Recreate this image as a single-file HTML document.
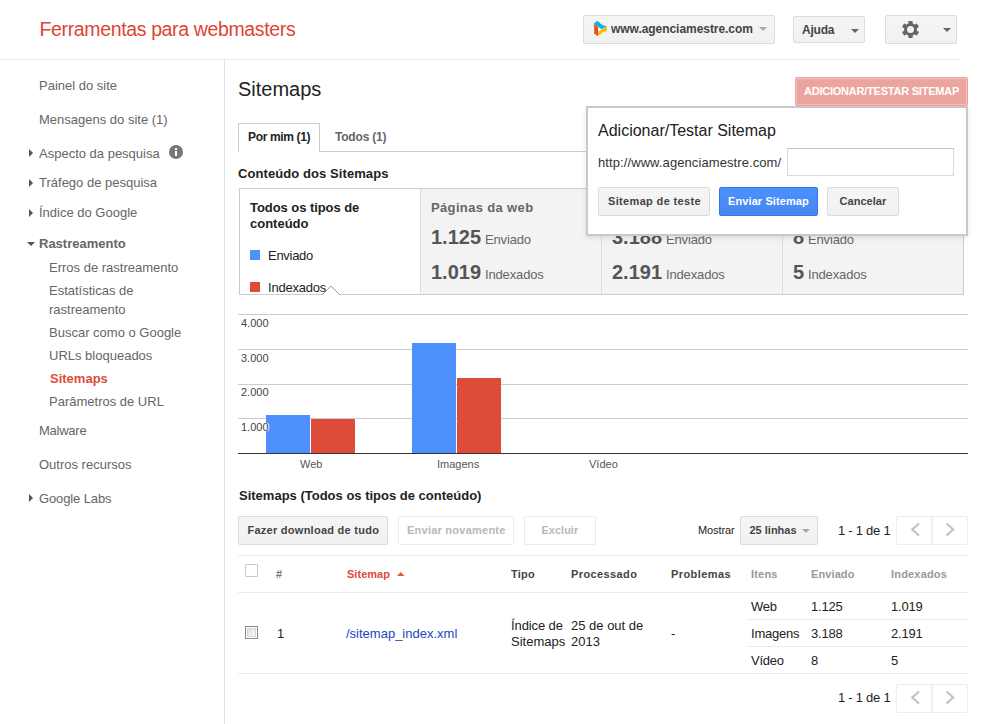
<!DOCTYPE html>
<html><head><meta charset="utf-8"><title>Sitemaps</title>
<style>
html,body{margin:0;padding:0;background:#fff;}
body{width:992px;height:724px;position:relative;overflow:hidden;font-family:"Liberation Sans",sans-serif;}
.t{position:absolute;white-space:nowrap;}
.b{position:absolute;}
</style></head><body>
<div class="t " style="left:39.5px;top:18.24px;font-size:19.5px;line-height:22px;color:#dd4433;letter-spacing:-0.36px;">Ferramentas para webmasters</div>
<div class="b" style="left:0px;top:59px;width:959px;height:1px;background:#ebebeb"></div>
<div class="b" style="left:583px;top:15px;width:192px;height:29px;background:linear-gradient(#f5f5f5,#f1f1f1);border:1px solid #dcdcdc;box-sizing:border-box;border-radius:2px"></div>
<svg class="b" style="left:590px;top:18px" width="20" height="20" viewBox="0 0 20 20">
<polygon points="8,8.8 12,10.8 8,13.8" fill="#fff"/>
<polygon points="4,5.25 7.46,3.04 9.1,4.1 10.2,5.5 11.6,6.1 12.2,6.9 15.5,8 16.8,8.6 12.2,10.7 11,11 8.3,9.1 4.1,6.6" fill="#12b2e6"/>
<polygon points="3.9,6.6 8.1,8.9 8.1,17.8 7.2,18 6.4,17.1 3.9,15.5 4.4,13.8 3.9,11.9 4.4,10.5 3.9,8.3" fill="#e6521f"/>
<polygon points="8,17.8 8,13.8 12.2,11 16.6,8.7 16.9,8.8 16.9,13 14.9,13.5 12.2,14.1 11.6,15.7 9.1,16.9" fill="#f3c200"/>
</svg>
<div class="t " style="left:611px;top:21.84px;font-size:12px;line-height:14px;color:#444;font-weight:bold;letter-spacing:-0.05px;">www.agenciamestre.com</div>
<div class="b" style="left:759px;top:27px;width:0;height:0;border-left:4px solid transparent;border-right:4px solid transparent;border-top:4px solid #aaa"></div>
<div class="b" style="left:793px;top:16px;width:72px;height:27px;background:linear-gradient(#f5f5f5,#f1f1f1);border:1px solid #dcdcdc;box-sizing:border-box;border-radius:2px"></div>
<div class="t " style="left:802px;top:22.84px;font-size:12px;line-height:14px;color:#444;font-weight:bold;letter-spacing:-0.2px;">Ajuda</div>
<div class="b" style="left:851px;top:29px;width:0;height:0;border-left:4px solid transparent;border-right:4px solid transparent;border-top:4px solid #666"></div>
<div class="b" style="left:885px;top:15px;width:72px;height:29px;background:linear-gradient(#f5f5f5,#f1f1f1);border:1px solid #dcdcdc;box-sizing:border-box;border-radius:2px"></div>
<svg class="b" style="left:901px;top:20px" width="19" height="19" viewBox="-9.5 -9.5 19 19"><g fill="#666"><rect x="-2.1" y="-8.6" width="4.2" height="5" rx="0.4" transform="rotate(0)"/><rect x="-2.1" y="-8.6" width="4.2" height="5" rx="0.4" transform="rotate(60)"/><rect x="-2.1" y="-8.6" width="4.2" height="5" rx="0.4" transform="rotate(120)"/><rect x="-2.1" y="-8.6" width="4.2" height="5" rx="0.4" transform="rotate(180)"/><rect x="-2.1" y="-8.6" width="4.2" height="5" rx="0.4" transform="rotate(240)"/><rect x="-2.1" y="-8.6" width="4.2" height="5" rx="0.4" transform="rotate(300)"/><circle r="6.4"/></g><circle r="3.5" fill="#f2f2f2"/></svg>
<div class="b" style="left:943px;top:28px;width:0;height:0;border-left:4px solid transparent;border-right:4px solid transparent;border-top:4px solid #666"></div>
<div class="b" style="left:224px;top:60px;width:1px;height:664px;background:#e3e3e3"></div>
<div class="t " style="left:39px;top:78.00px;font-size:13px;line-height:15px;color:#666;">Painel do site</div>
<div class="t " style="left:39px;top:112.00px;font-size:13px;line-height:15px;color:#666;">Mensagens do site (1)</div>
<div class="b" style="left:29px;top:149px;width:0;height:0;border-top:4px solid transparent;border-bottom:4px solid transparent;border-left:4px solid #555"></div>
<div class="t " style="left:39px;top:146.00px;font-size:13px;line-height:15px;color:#666;">Aspecto da pesquisa</div>
<svg class="b" style="left:169px;top:145px" width="14" height="14" viewBox="0 0 14 14"><circle cx="7" cy="7" r="7" fill="#777"/><rect x="6" y="3" width="2" height="2" fill="#fff"/><rect x="6" y="6" width="2" height="5" fill="#fff"/></svg>
<div class="b" style="left:29px;top:179px;width:0;height:0;border-top:4px solid transparent;border-bottom:4px solid transparent;border-left:4px solid #555"></div>
<div class="t " style="left:39px;top:175.00px;font-size:13px;line-height:15px;color:#666;">Tráfego de pesquisa</div>
<div class="b" style="left:29px;top:209px;width:0;height:0;border-top:4px solid transparent;border-bottom:4px solid transparent;border-left:4px solid #555"></div>
<div class="t " style="left:39px;top:205.00px;font-size:13px;line-height:15px;color:#666;">Índice do Google</div>
<div class="b" style="left:27px;top:242px;width:0;height:0;border-left:4px solid transparent;border-right:4px solid transparent;border-top:4px solid #555"></div>
<div class="t " style="left:39px;top:236.00px;font-size:13px;line-height:15px;color:#666;font-weight:bold;">Rastreamento</div>
<div class="t " style="left:49px;top:260.00px;font-size:13px;line-height:15px;color:#666;">Erros de rastreamento</div>
<div class="t " style="left:49px;top:283.00px;font-size:13px;line-height:15px;color:#666;">Estatísticas de</div>
<div class="t " style="left:49px;top:302.00px;font-size:13px;line-height:15px;color:#666;">rastreamento</div>
<div class="t " style="left:49px;top:325.00px;font-size:13px;line-height:15px;color:#666;">Buscar como o Google</div>
<div class="t " style="left:49px;top:348.00px;font-size:13px;line-height:15px;color:#666;">URLs bloqueados</div>
<div class="t " style="left:50px;top:371.00px;font-size:13px;line-height:15px;color:#dd4b39;font-weight:bold;">Sitemaps</div>
<div class="t " style="left:49px;top:394.00px;font-size:13px;line-height:15px;color:#666;">Parâmetros de URL</div>
<div class="t " style="left:39px;top:423.00px;font-size:13px;line-height:15px;color:#666;letter-spacing:-0.25px;">Malware</div>
<div class="t " style="left:39px;top:457.00px;font-size:13px;line-height:15px;color:#666;">Outros recursos</div>
<div class="b" style="left:29px;top:494px;width:0;height:0;border-top:4px solid transparent;border-bottom:4px solid transparent;border-left:4px solid #555"></div>
<div class="t " style="left:39px;top:491.00px;font-size:13px;line-height:15px;color:#666;letter-spacing:-0.12px;">Google Labs</div>
<div class="t " style="left:238px;top:77.57px;font-size:20px;line-height:23px;color:#222;">Sitemaps</div>
<div class="b" style="left:320px;top:151px;width:648px;height:1px;background:#ccc"></div>
<div class="b" style="left:238px;top:123px;width:82px;height:29px;border:1px solid #ccc;border-bottom:0;box-sizing:border-box;background:#fff"></div>
<div class="t " style="left:248px;top:129.84px;font-size:12px;line-height:14px;color:#222;font-weight:bold;letter-spacing:-0.35px;">Por mim (1)</div>
<div class="t " style="left:335px;top:129.84px;font-size:12px;line-height:14px;color:#666;font-weight:bold;letter-spacing:-0.2px;">Todos (1)</div>
<div class="t " style="left:238px;top:165.50px;font-size:13px;line-height:15px;color:#222;font-weight:bold;letter-spacing:0.08px;">Conteúdo dos Sitemaps</div>
<div class="b" style="left:239px;top:188px;width:725px;height:107px;border:1px solid #ccc;box-sizing:border-box;background:#f3f3f3"></div>
<div class="b" style="left:240px;top:189px;width:180px;height:105px;background:#fff"></div>
<div class="b" style="left:420px;top:189px;width:1px;height:105px;background:#ddd"></div>
<div class="b" style="left:601px;top:189px;width:1px;height:105px;background:#ddd"></div>
<div class="b" style="left:782px;top:189px;width:1px;height:105px;background:#ddd"></div>
<div class="t " style="left:250px;top:200.00px;font-size:13px;line-height:15px;color:#222;font-weight:bold;letter-spacing:-0.06px;">Todos os tipos de</div>
<div class="t " style="left:250px;top:216.00px;font-size:13px;line-height:15px;color:#222;font-weight:bold;">conteúdo</div>
<div class="b" style="left:250px;top:250px;width:10px;height:10px;background:#4d90fe"></div>
<div class="t " style="left:268px;top:248.00px;font-size:13px;line-height:15px;color:#222;letter-spacing:-0.28px;">Enviado</div>
<div class="b" style="left:250px;top:282px;width:10px;height:10px;background:#dd4b39"></div>
<div class="t " style="left:268px;top:280.00px;font-size:13px;line-height:15px;color:#222;letter-spacing:-0.22px;">Indexados</div>
<svg class="b" style="left:322px;top:285px" width="18" height="10" viewBox="0 0 18 10"><polygon points="0,10 9,1 18,10" fill="#fff" stroke="#999" stroke-width="1"/><rect x="1" y="9" width="16" height="2" fill="#fff"/></svg>
<div class="t " style="left:431px;top:200.00px;font-size:13px;line-height:15px;color:#666;font-weight:bold;letter-spacing:0.35px;">Páginas da web</div>
<div class="t " style="left:431px;top:225.57px;font-size:20px;line-height:23px;color:#555;font-weight:bold;">1.125</div>
<div class="t " style="left:485px;top:232.00px;font-size:13px;line-height:15px;color:#666;letter-spacing:-0.15px;">Enviado</div>
<div class="t " style="left:431px;top:260.57px;font-size:20px;line-height:23px;color:#555;font-weight:bold;">1.019</div>
<div class="t " style="left:485px;top:267.00px;font-size:13px;line-height:15px;color:#666;letter-spacing:-0.15px;">Indexados</div>
<div class="t " style="left:612px;top:200.00px;font-size:13px;line-height:15px;color:#666;font-weight:bold;">Imagens</div>
<div class="t " style="left:612px;top:225.57px;font-size:20px;line-height:23px;color:#555;font-weight:bold;">3.188</div>
<div class="t " style="left:666px;top:232.00px;font-size:13px;line-height:15px;color:#666;letter-spacing:-0.15px;">Enviado</div>
<div class="t " style="left:612px;top:260.57px;font-size:20px;line-height:23px;color:#555;font-weight:bold;">2.191</div>
<div class="t " style="left:666px;top:267.00px;font-size:13px;line-height:15px;color:#666;letter-spacing:-0.15px;">Indexados</div>
<div class="t " style="left:793px;top:200.00px;font-size:13px;line-height:15px;color:#666;font-weight:bold;">Vídeo</div>
<div class="t " style="left:793px;top:225.57px;font-size:20px;line-height:23px;color:#555;font-weight:bold;">8</div>
<div class="t " style="left:808px;top:232.00px;font-size:13px;line-height:15px;color:#666;letter-spacing:-0.15px;">Enviado</div>
<div class="t " style="left:793px;top:260.57px;font-size:20px;line-height:23px;color:#555;font-weight:bold;">5</div>
<div class="t " style="left:808px;top:267.00px;font-size:13px;line-height:15px;color:#666;letter-spacing:-0.15px;">Indexados</div>
<div class="b" style="left:238px;top:314px;width:730px;height:1px;background:#ccc"></div>
<div class="b" style="left:238px;top:349px;width:730px;height:1px;background:#ccc"></div>
<div class="b" style="left:238px;top:384px;width:730px;height:1px;background:#ccc"></div>
<div class="b" style="left:238px;top:418px;width:730px;height:1px;background:#ccc"></div>
<div class="b" style="left:238px;top:453px;width:730px;height:1px;background:#333"></div>
<div class="b" style="left:266px;top:415px;width:44px;height:38px;background:#4d8ffd"></div>
<div class="b" style="left:311px;top:419px;width:44px;height:34px;background:#dd4b39"></div>
<div class="b" style="left:412px;top:343px;width:44px;height:110px;background:#4d8ffd"></div>
<div class="b" style="left:457px;top:378px;width:44px;height:75px;background:#dd4b39"></div>
<div class="t " style="left:241px;top:316.69px;font-size:11px;line-height:13px;color:#444;text-shadow:0 0 1px #fff,0 0 1px #fff,1px 0 0 #fff,-1px 0 0 #fff">4.000</div>
<div class="t " style="left:241px;top:351.69px;font-size:11px;line-height:13px;color:#444;text-shadow:0 0 1px #fff,0 0 1px #fff,1px 0 0 #fff,-1px 0 0 #fff">3.000</div>
<div class="t " style="left:241px;top:385.69px;font-size:11px;line-height:13px;color:#444;text-shadow:0 0 1px #fff,0 0 1px #fff,1px 0 0 #fff,-1px 0 0 #fff">2.000</div>
<div class="t " style="left:241px;top:420.69px;font-size:11px;line-height:13px;color:#444;text-shadow:0 0 1px #fff,0 0 1px #fff,1px 0 0 #fff,-1px 0 0 #fff">1.000</div>
<div class="t " style="left:300px;top:457.69px;font-size:11px;line-height:13px;color:#555;">Web</div>
<div class="t " style="left:437px;top:457.69px;font-size:11px;line-height:13px;color:#555;">Imagens</div>
<div class="t " style="left:589px;top:457.69px;font-size:11px;line-height:13px;color:#555;">Vídeo</div>
<div class="t " style="left:239px;top:488.00px;font-size:13px;line-height:15px;color:#222;font-weight:bold;">Sitemaps (Todos os tipos de conteúdo)</div>
<div class="b" style="left:238px;top:516px;width:150px;height:29px;background:linear-gradient(#f5f5f5,#f1f1f1);border:1px solid #dcdcdc;box-sizing:border-box;border-radius:2px"></div>
<div class="t " style="left:247.5px;top:523.69px;font-size:11px;line-height:13px;color:#444;font-weight:bold;letter-spacing:0.26px;">Fazer download de tudo</div>
<div class="b" style="left:398px;top:516px;width:116px;height:29px;background:#fff;border:1px solid #ebebeb;box-sizing:border-box;border-radius:2px"></div>
<div class="t " style="left:407px;top:523.69px;font-size:11px;line-height:13px;color:#b8b8b8;font-weight:bold;letter-spacing:0.24px;">Enviar novamente</div>
<div class="b" style="left:524px;top:516px;width:72px;height:29px;background:#fff;border:1px solid #ebebeb;box-sizing:border-box;border-radius:2px"></div>
<div class="t " style="left:541.5px;top:523.69px;font-size:11px;line-height:13px;color:#b8b8b8;font-weight:bold;">Excluir</div>
<div class="t " style="left:698px;top:523.69px;font-size:11px;line-height:13px;color:#222;letter-spacing:-0.1px;">Mostrar</div>
<div class="b" style="left:740px;top:516px;width:78px;height:29px;background:linear-gradient(#f5f5f5,#f1f1f1);border:1px solid #dcdcdc;box-sizing:border-box;border-radius:2px"></div>
<div class="t " style="left:749.5px;top:523.69px;font-size:11px;line-height:13px;color:#444;font-weight:bold;">25 linhas</div>
<div class="b" style="left:802px;top:529px;width:0;height:0;border-left:4px solid transparent;border-right:4px solid transparent;border-top:4px solid #aaa"></div>
<div class="t " style="left:838px;top:523.00px;font-size:13px;line-height:15px;color:#222;letter-spacing:-0.25px;">1 - 1 de 1</div>
<div class="b" style="left:896px;top:516px;width:72px;height:29px;border:1px solid #ededed;box-sizing:border-box;border-radius:2px;background:#fff"></div>
<div class="b" style="left:931px;top:516px;width:2px;height:29px;background:#efefef"></div>
<svg class="b" style="left:908px;top:521px" width="14" height="18" viewBox="0 0 14 18"><polyline points="11,2.5 4.3,8.5 11,14.5" fill="none" stroke="#c2c2c2" stroke-width="2.2"/></svg>
<svg class="b" style="left:943px;top:521px" width="14" height="18" viewBox="0 0 14 18"><polyline points="3.5,2.5 10.2,8.5 3.5,14.5" fill="none" stroke="#c2c2c2" stroke-width="2.2"/></svg>
<div class="b" style="left:238px;top:555px;width:730px;height:1px;background:#ebebeb"></div>
<div class="b" style="left:238px;top:592px;width:730px;height:1px;background:#ebebeb"></div>
<div class="b" style="left:238px;top:673px;width:730px;height:1px;background:#ebebeb"></div>
<div class="b" style="left:748px;top:619px;width:220px;height:1px;background:#ebebeb"></div>
<div class="b" style="left:748px;top:646px;width:220px;height:1px;background:#ebebeb"></div>
<div class="b" style="left:245px;top:564px;width:13px;height:13px;border:1px solid #c8c8c8;box-sizing:border-box;background:#fff;border-radius:1px"></div>
<div class="t " style="left:276px;top:567.69px;font-size:11px;line-height:13px;color:#777;font-weight:bold;">#</div>
<div class="t " style="left:347px;top:567.69px;font-size:11px;line-height:13px;color:#dd4b39;font-weight:bold;letter-spacing:0.03px;">Sitemap</div>
<svg class="b" style="left:397px;top:572px" width="8" height="4" viewBox="0 0 8 4"><polygon points="0,4 3.75,0 7.5,4" fill="#e05a48"/></svg>
<div class="t " style="left:511px;top:567.69px;font-size:11px;line-height:13px;color:#444;font-weight:bold;letter-spacing:0.2px;">Tipo</div>
<div class="t " style="left:571px;top:567.69px;font-size:11px;line-height:13px;color:#444;font-weight:bold;letter-spacing:0.39px;">Processado</div>
<div class="t " style="left:671px;top:567.69px;font-size:11px;line-height:13px;color:#444;font-weight:bold;letter-spacing:0.41px;">Problemas</div>
<div class="t " style="left:751px;top:567.69px;font-size:11px;line-height:13px;color:#999;font-weight:bold;letter-spacing:0.2px;">Itens</div>
<div class="t " style="left:811px;top:567.69px;font-size:11px;line-height:13px;color:#999;font-weight:bold;letter-spacing:0.1px;">Enviado</div>
<div class="t " style="left:891px;top:567.69px;font-size:11px;line-height:13px;color:#999;font-weight:bold;letter-spacing:0.18px;">Indexados</div>
<div class="b" style="left:245px;top:626px;width:13px;height:13px;border:1px solid #8a8a8a;box-sizing:border-box;background:#fff"></div>
<div class="b" style="left:247px;top:628px;width:9px;height:9px;border:1px solid #d3d6dc;box-sizing:border-box;background:linear-gradient(135deg,#dcdfe5,#f8f8f8)"></div>
<div class="t " style="left:277px;top:626.00px;font-size:13px;line-height:15px;color:#222;">1</div>
<div class="t " style="left:346px;top:626.00px;font-size:13px;line-height:15px;color:#2246bd;">/sitemap_index.xml</div>
<div class="t " style="left:511px;top:618.00px;font-size:13px;line-height:15px;color:#222;letter-spacing:-0.1px;">Índice de</div>
<div class="t " style="left:511px;top:633.50px;font-size:13px;line-height:15px;color:#222;">Sitemaps</div>
<div class="t " style="left:571px;top:618.00px;font-size:13px;line-height:15px;color:#222;">25 de out de</div>
<div class="t " style="left:571px;top:633.50px;font-size:13px;line-height:15px;color:#222;">2013</div>
<div class="t " style="left:671px;top:626.00px;font-size:13px;line-height:15px;color:#222;">-</div>
<div class="t " style="left:751px;top:599.00px;font-size:13px;line-height:15px;color:#222;letter-spacing:-0.22px;">Web</div>
<div class="t " style="left:811px;top:599.00px;font-size:13px;line-height:15px;color:#222;letter-spacing:-0.22px;">1.125</div>
<div class="t " style="left:891px;top:599.00px;font-size:13px;line-height:15px;color:#222;letter-spacing:-0.22px;">1.019</div>
<div class="t " style="left:751px;top:626.00px;font-size:13px;line-height:15px;color:#222;letter-spacing:-0.22px;">Imagens</div>
<div class="t " style="left:811px;top:626.00px;font-size:13px;line-height:15px;color:#222;letter-spacing:-0.22px;">3.188</div>
<div class="t " style="left:891px;top:626.00px;font-size:13px;line-height:15px;color:#222;letter-spacing:-0.22px;">2.191</div>
<div class="t " style="left:751px;top:653.00px;font-size:13px;line-height:15px;color:#222;letter-spacing:-0.22px;">Vídeo</div>
<div class="t " style="left:811px;top:653.00px;font-size:13px;line-height:15px;color:#222;">8</div>
<div class="t " style="left:891px;top:653.00px;font-size:13px;line-height:15px;color:#222;">5</div>
<div class="t " style="left:838px;top:690.00px;font-size:13px;line-height:15px;color:#222;letter-spacing:-0.25px;">1 - 1 de 1</div>
<div class="b" style="left:896px;top:684px;width:72px;height:29px;border:1px solid #ededed;box-sizing:border-box;border-radius:2px;background:#fff"></div>
<div class="b" style="left:931px;top:684px;width:2px;height:29px;background:#efefef"></div>
<svg class="b" style="left:908px;top:689px" width="14" height="18" viewBox="0 0 14 18"><polyline points="11,2.5 4.3,8.5 11,14.5" fill="none" stroke="#c2c2c2" stroke-width="2.2"/></svg>
<svg class="b" style="left:943px;top:689px" width="14" height="18" viewBox="0 0 14 18"><polyline points="3.5,2.5 10.2,8.5 3.5,14.5" fill="none" stroke="#c2c2c2" stroke-width="2.2"/></svg>
<div class="b" style="left:795px;top:77px;width:173px;height:29px;background:#eca59e;border:1px solid #eca29a;box-sizing:border-box;border-radius:2px;box-shadow:inset 0 0 0 1px #f4c2bd"></div>
<div class="t " style="left:804px;top:84.69px;font-size:11px;line-height:13px;color:#fff;font-weight:bold;letter-spacing:-0.23px;">ADICIONAR/TESTAR SITEMAP</div>
<div class="b" style="left:586px;top:106px;width:382px;height:130px;background:#fff;border:2px solid #c9c9c9;box-sizing:border-box;box-shadow:0 2px 5px rgba(0,0,0,.10)"></div>
<div class="t " style="left:598px;top:122.46px;font-size:16px;line-height:18px;color:#222;">Adicionar/Testar Sitemap</div>
<div class="t " style="left:598px;top:154.50px;font-size:13px;line-height:15px;color:#333;letter-spacing:0.09px;">http://www.agenciamestre.com/</div>
<div class="b" style="left:787px;top:148px;width:167px;height:28px;border:1px solid #d9d9d9;border-top:1px solid #c0c0c0;box-sizing:border-box;background:#fff"></div>
<div class="b" style="left:598px;top:187px;width:112px;height:29px;background:linear-gradient(#f5f5f5,#f1f1f1);border:1px solid #dcdcdc;box-sizing:border-box;border-radius:2px"></div>
<div class="t " style="left:608px;top:194.69px;font-size:11px;line-height:13px;color:#444;font-weight:bold;letter-spacing:0.34px;">Sitemap de teste</div>
<div class="b" style="left:719px;top:187px;width:99px;height:29px;background:linear-gradient(#4d90fe,#4787ed);border:1px solid #3079ed;box-sizing:border-box;border-radius:2px"></div>
<div class="t " style="left:728px;top:194.69px;font-size:11px;line-height:13px;color:#fff;font-weight:bold;letter-spacing:0.1px;">Enviar Sitemap</div>
<div class="b" style="left:827px;top:187px;width:72px;height:29px;background:linear-gradient(#f5f5f5,#f1f1f1);border:1px solid #dcdcdc;box-sizing:border-box;border-radius:2px"></div>
<div class="t " style="left:839.5px;top:194.69px;font-size:11px;line-height:13px;color:#444;font-weight:bold;letter-spacing:0.05px;">Cancelar</div>
</body></html>
